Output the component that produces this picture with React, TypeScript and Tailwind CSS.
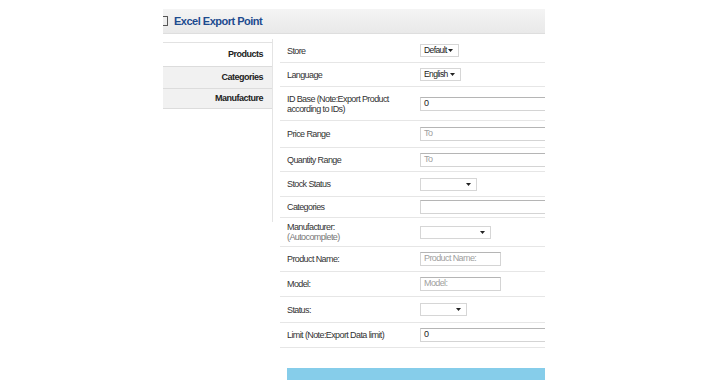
const font = "font-['Liberation_Sans',Arial,sans-serif]";

type Field =
  | { kind: 'select'; width: string; value?: string }
  | { kind: 'text'; width: string; value?: string; placeholder?: string };

interface Row {
  label: string;
  sub?: string;
  height: string;
  field: Field;
}

const rows: Row[] = [
  { label: 'Store', height: 'h-[24px]', field: { kind: 'select', width: 'w-[39px]', value: 'Default' } },
  { label: 'Language', height: 'h-[24px]', field: { kind: 'select', width: 'w-[41px]', value: 'English' } },
  { label: 'ID Base (Note:Export Product', sub: 'according to IDs)', height: 'h-[34px]', field: { kind: 'text', width: 'w-[140px]', value: '0' } },
  { label: 'Price Range', height: 'h-[27px]', field: { kind: 'text', width: 'w-[140px]', placeholder: 'To' } },
  { label: 'Quantity Range', height: 'h-[24px]', field: { kind: 'text', width: 'w-[140px]', placeholder: 'To' } },
  { label: 'Stock Status', height: 'h-[25px]', field: { kind: 'select', width: 'w-[57px]' } },
  { label: 'Categories', height: 'h-[21px]', field: { kind: 'text', width: 'w-[140px]' } },
  { label: 'Manufacturer:', sub: '(Autocomplete)', height: 'h-[29px]', field: { kind: 'select', width: 'w-[71px]' } },
  { label: 'Product Name:', height: 'h-[25px]', field: { kind: 'text', width: 'w-[81px]', placeholder: 'Product Name:' } },
  { label: 'Model:', height: 'h-[25px]', field: { kind: 'text', width: 'w-[81px]', placeholder: 'Model:' } },
  { label: 'Status:', height: 'h-[26px]', field: { kind: 'select', width: 'w-[47px]' } },
  { label: 'Limit (Note:Export Data limit)', height: 'h-[25px]', field: { kind: 'text', width: 'w-[140px]', value: '0' } },
];

function Caret() {
  return (
    <svg width="5" height="3" viewBox="0 0 5 3" className="shrink-0">
      <path d="M0 0h5L2.5 3z" fill="#222" />
    </svg>
  );
}

function FieldControl({ field }: { field: Field }) {
  if (field.kind === 'select') {
    return (
      <div className={`${field.width} shrink-0 h-[13px] flex items-center justify-between pl-[3px] pr-[5px] border border-[#d6d6d6] bg-white text-[8.5px] tracking-[-0.6px] text-[#222]`}>
        <span>{field.value ?? ''}</span>
        <Caret />
      </div>
    );
  }
  return (
    <div className={`${field.width} shrink-0 h-[14px] flex items-center pl-[3px] border border-[#d4d4d4] border-t-[#b5b5b5] bg-white text-[9px] tracking-[-0.6px]`}>
      {field.value ? (
        <span className="text-[#222]">{field.value}</span>
      ) : (
        <span className="text-[#a0a0a0]">{field.placeholder ?? ''}</span>
      )}
    </div>
  );
}

export default function App() {
  return (
    <div className={`w-[710px] h-[380px] bg-white overflow-hidden ${font}`}>
      <div className="ml-[163px] w-[382px] pt-[9px]">
        <div className="h-[25px] flex items-center gap-[6px] bg-gradient-to-b from-[#f4f4f4] to-[#e9e9e9] border-b border-[#dedede]">
          <div className="w-[5px] h-[10px] border-t border-r border-b border-[#555] rounded-r-[1px]" />
          <span className="text-[11px] font-bold tracking-[-0.5px] text-[#1d4b8f]">Excel Export Point</span>
        </div>

        <div className="flex mt-[5px]">
          <div className="w-[110px] shrink-0 h-[183px] border-r border-[#e4e4e4]">
            <div className="h-[3px]" />
            <div className="h-[24px] flex items-center justify-end pr-[9px] border-t border-[#e2e2e2] bg-white text-[9px] font-bold tracking-[-0.5px] text-[#222]">
              Products
            </div>
            <div className="h-[22px] flex items-center justify-end pr-[9px] border-t border-[#dcdcdc] bg-[#f1f1f1] text-[9px] font-bold tracking-[-0.5px] text-[#222]">
              Categories
            </div>
            <div className="h-[21px] flex items-center justify-end pr-[9px] border-t border-b border-[#dcdcdc] bg-[#f1f1f1] text-[9px] font-bold tracking-[-0.5px] text-[#222]">
              Manufacture
            </div>
          </div>

          <div className="ml-[7px] flex-1 min-w-0 overflow-hidden">
            {rows.map((row) => (
              <div key={row.label} className={`${row.height} flex items-center border-b border-[#e6e6e6]`}>
                <div className="w-[140px] shrink-0 pl-[7px] text-[9px] leading-[10px] tracking-[-0.6px] text-[#333]">
                  <div>{row.label}</div>
                  {row.sub && (
                    <div className={row.label.startsWith('Manufacturer') ? 'text-[#777]' : ''}>{row.sub}</div>
                  )}
                </div>
                <FieldControl field={row.field} />
              </div>
            ))}
            <div className="mt-[20px] ml-[7px] h-[14px] bg-[#86cdea]" />
          </div>
        </div>
      </div>
    </div>
  );
}
